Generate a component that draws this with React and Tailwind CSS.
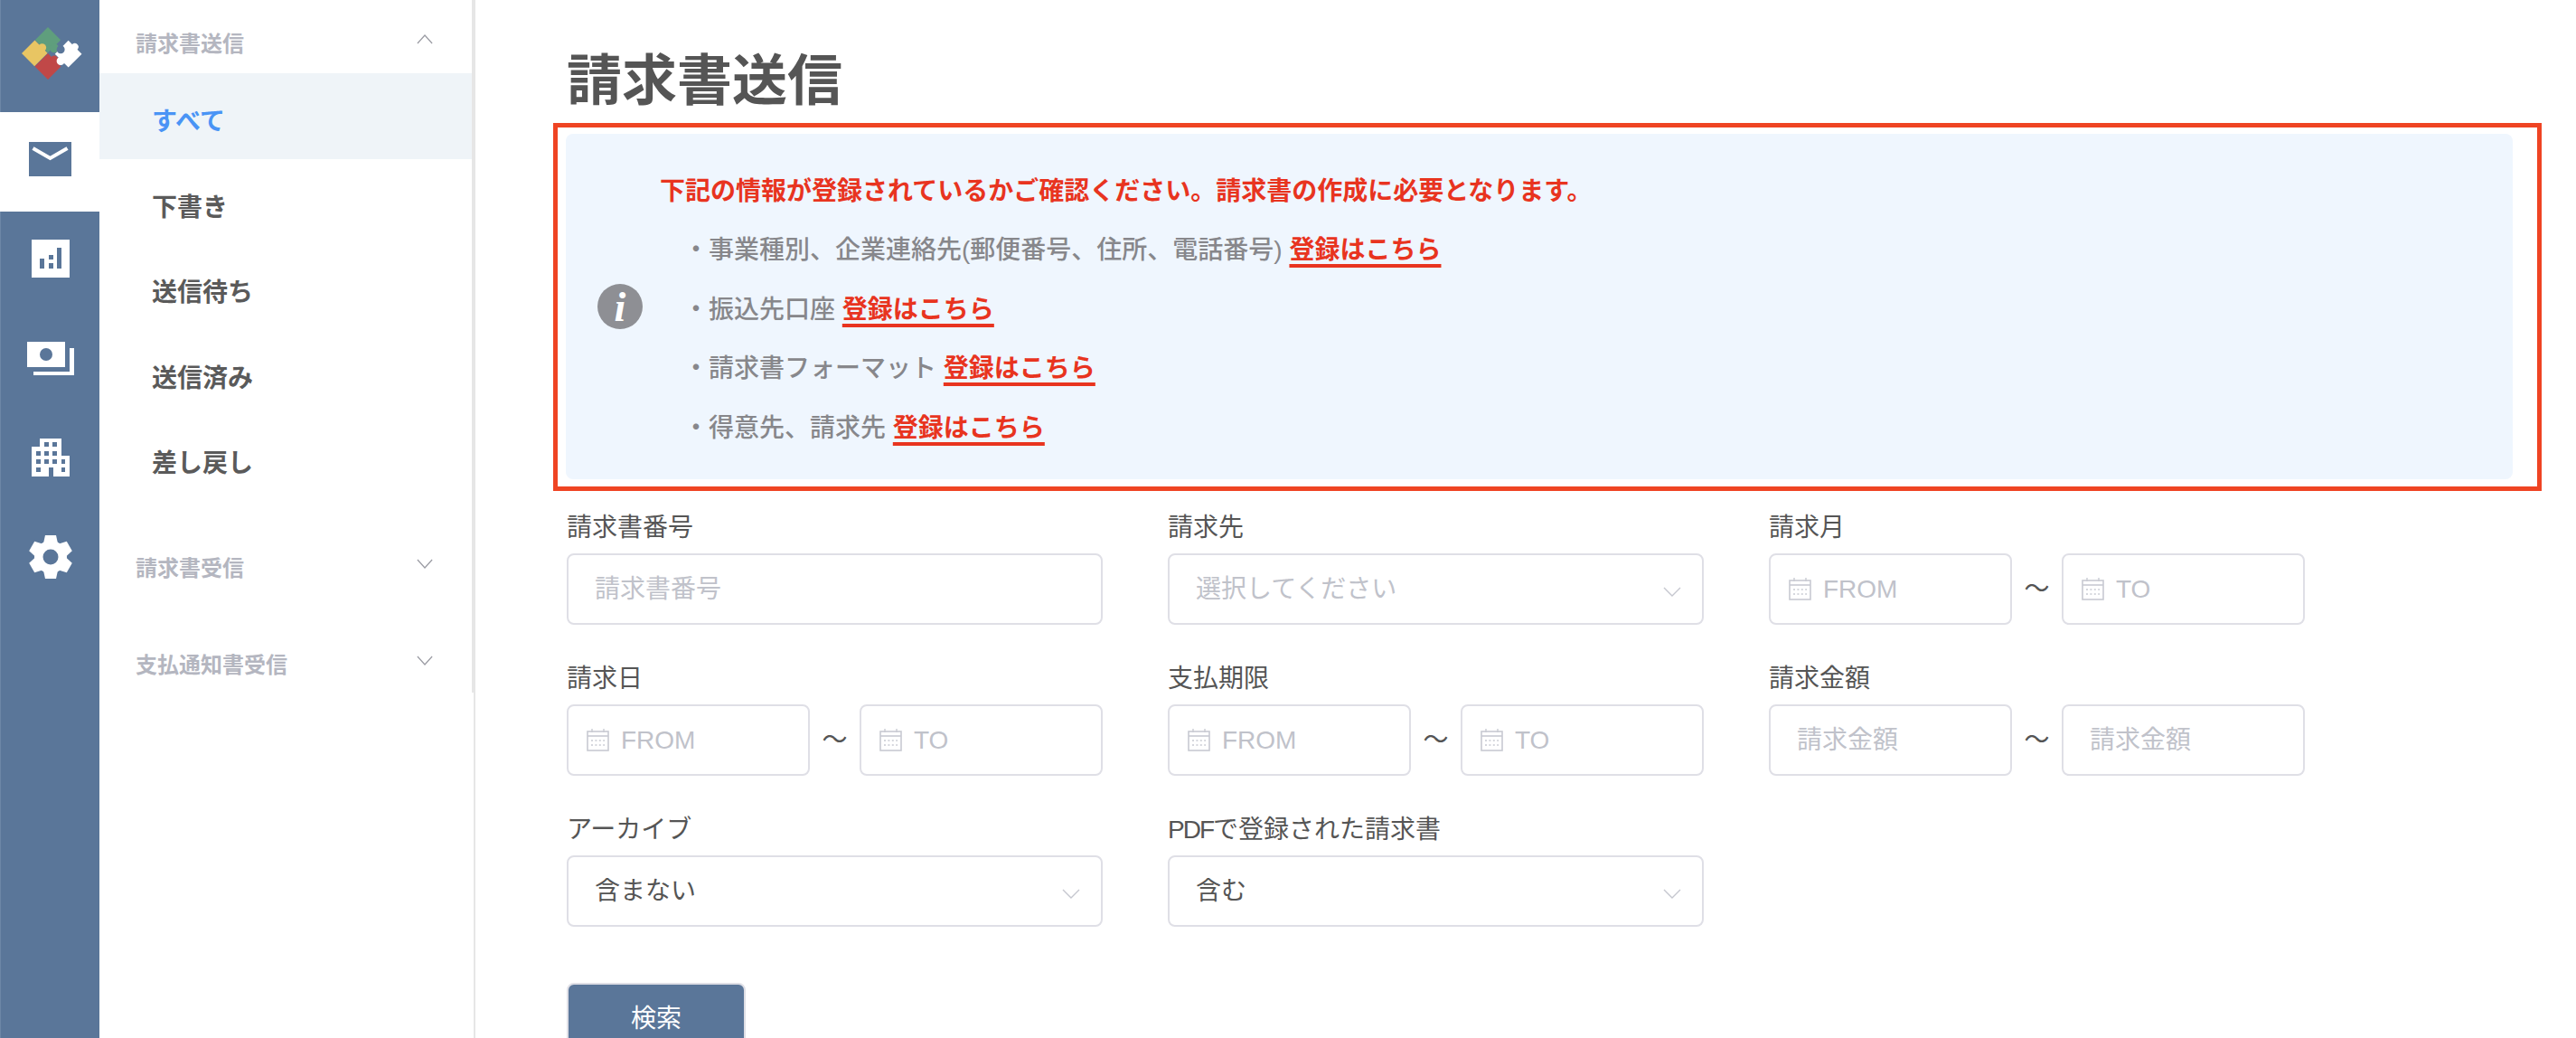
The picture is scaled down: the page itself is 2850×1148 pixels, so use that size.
import React from 'react';

const BLUE = '#5a7699';

// Puzzle logo, drawn in a rotated square grid
const Logo = () => (
    <svg width="110" height="124" viewBox="0 0 110 124">
        <g transform="translate(52 59) rotate(45)">
            <rect x="-20.5" y="-20.5" width="20" height="20" fill="#5f9e7d" />
            <rect x="-20.5" y="0" width="20" height="20.5" fill="#e8c563" />
            <rect x="0" y="0" width="20.5" height="20.5" fill="#c04848" />
            <circle cx="-9" cy="0" r="4.5" fill="#e8c563" />
            <circle cx="9" cy="-1" r="4.5" fill="#c04848" transform="rotate(90 9 0)" />
            <circle cx="1" cy="-9" r="5" fill="#5f9e7d" />
            <g transform="translate(4 -4)">
                <rect x="2" y="-22" width="21" height="21" fill="#fff" />
                <circle cx="3" cy="-9" r="4.5" fill={BLUE} />
                <circle cx="12" cy="0" r="4.5" fill="#fff" />
                <circle cx="12" cy="-22" r="4" fill="#fff" />
            </g>
        </g>
    </svg>
);

const MailIcon = () => (
    <svg width="47" height="38" viewBox="0 0 47 38">
        <rect width="47" height="38" fill={BLUE} />
        <path d="M4.5 7 L23.5 18 L42.5 7" fill="none" stroke="#fff" strokeWidth="4" />
    </svg>
);

const ChartIcon = () => (
    <svg width="42" height="42" viewBox="0 0 42 42">
        <rect width="42" height="42" fill="#fff" />
        <path d="M9 21h5v11H9zM19 17h5v5h-5zM19 26h5v6h-5zM28 9h5v23h-5z" fill={BLUE} />
    </svg>
);

const MoneyIcon = () => (
    <svg width="52" height="37" viewBox="0 0 52 37">
        <path d="M0 0h42v28H0z" fill="#fff" />
        <circle cx="21" cy="14" r="7" fill={BLUE} />
        <path d="M47 7h5v30H7v-4h40z" fill="#fff" />
    </svg>
);

const BuildingIcon = () => (
    <svg width="42" height="42" viewBox="0 0 42 42">
        <path d="M9 0h24v19h9v23H0V9h9z" fill="#fff" />
        <path
            d="M14 4h5v5h-5zM23 4h5v5h-5zM5 14h5v5H5zM14 14h5v5h-5zM23 14h5v5h-5zM5 23h5v5H5zM14 23h5v5h-5zM23 23h5v5h-5zM33 23h4v5h-4zM5 32h5v5H5zM33 32h4v5h-4zM19 32h5v10h-5z"
            fill={BLUE}
        />
    </svg>
);

const GearIcon = () => (
    <svg width="48" height="48" viewBox="-24 -24 48 48">
        <circle r="18" fill="#fff" />
        {[0, 60, 120, 180, 240, 300].map((a) => (
            <path key={a} d="M-8 -15 L-6 -24 L6 -24 L8 -15 Z" fill="#fff" transform={`rotate(${a})`} />
        ))}
        <circle r="8.5" fill={BLUE} />
    </svg>
);

const Chevron = ({ up, color = '#9a9ba3', className = '', width = 20 }) => (
    <svg width={width} height="12" viewBox="0 0 20 12" preserveAspectRatio="none" className={className}>
        <path d={up ? 'M1 11 L10 2 L19 11' : 'M1 1 L10 10 L19 1'} fill="none" stroke={color} strokeWidth="1.4" />
    </svg>
);

const CalendarIcon = () => (
    <svg width="25" height="25" viewBox="0 0 25 25" className="shrink-0">
        <rect x="1" y="3" width="23" height="21" fill="none" stroke="#c8cad2" strokeWidth="1.6" />
        <path d="M1 8h23" stroke="#c8cad2" strokeWidth="1.6" />
        <path d="M6 0v4M19 0v4" stroke="#c8cad2" strokeWidth="1.4" />
        <path d="M5 13h15M5 18h15" stroke="#c8cad2" strokeWidth="1.6" strokeDasharray="2 2.4" />
    </svg>
);

const InfoIcon = () => (
    <div className="w-[50px] h-[50px] shrink-0 rounded-full bg-[#8e8f94] flex items-center justify-center text-white text-[46px] font-bold italic font-['Liberation_Serif',serif]">
        i
    </div>
);

const RailItem = ({ active, children }) => (
    <div className={`h-[110px] flex items-center justify-center pb-[6px] ${active ? 'bg-white -ml-px' : ''}`}>{children}</div>
);

// Left icon rail
const Rail = () => (
    <nav className="w-[110px] shrink-0 bg-[#5a7699] border-l border-[#6c86a6]">
        <div className="h-[124px]">
            <Logo />
        </div>
        <RailItem active>
            <MailIcon />
        </RailItem>
        <RailItem>
            <ChartIcon />
        </RailItem>
        <RailItem>
            <MoneyIcon />
        </RailItem>
        <RailItem>
            <BuildingIcon />
        </RailItem>
        <RailItem>
            <GearIcon />
        </RailItem>
    </nav>
);

const MenuHead = ({ title, up, className, chevronClass }) => (
    <div className={`flex justify-between pl-[40px] pr-[43px] text-[24px] font-bold text-[#b4b6c0] ${className}`}>
        <span>{title}</span>
        <Chevron up={up} width={18} className={chevronClass} />
    </div>
);

const items = ['すべて', '下書き', '送信待ち', '送信済み', '差し戻し'];

// Sub menu column
const SubMenu = () => (
    <aside className="w-[416px] shrink-0 border-r-2 border-[#e6e6e6]">
        <div className="h-[766px] border-r-2 border-[#e6e6e6]">
            <MenuHead title="請求書送信" up className="h-[81px] pt-[31px] leading-[36px]" chevronClass="mt-[6px]" />
            {items.map((t, i) => (
                <div
                    key={t}
                    className={`h-[94.5px] pl-[58px] pt-[14px] flex items-center text-[28px] font-bold ${
                        i === 0 ? 'bg-[#eff4f8] text-[#4a94f5]' : 'text-[#5a5a5a]'
                    }`}
                >
                    {t}
                </div>
            ))}
            <MenuHead title="請求書受信" className="mt-[57px] h-[36px] leading-[36px] items-center" chevronClass="mb-[10px]" />
            <MenuHead title="支払通知書受信" className="mt-[71px] h-[36px] leading-[36px] items-center" chevronClass="mb-[10px]" />
        </div>
    </aside>
);

const Register = () => (
    <a className="font-bold text-[#e8341f] underline decoration-[4px] underline-offset-[6px]">登録はこちら</a>
);

const notices = ['事業種別、企業連絡先(郵便番号、住所、電話番号)', '振込先口座', '請求書フォーマット', '得意先、請求先'];

const Notice = () => (
    <div className="mt-[13px] h-[407px] border-[5px] border-[#ef4423] pt-[7px] pb-[8px] pl-[9px] pr-[27px] -ml-[15px] w-[2200px]">
        <div className="h-[382px] rounded-[8px] bg-[#eff6fe] flex items-center pl-[35px] gap-[19px]">
            <InfoIcon />
            <div className="pt-[7px] text-[28px] leading-[65.5px]">
                <p className="font-bold text-[#e8341f]">下記の情報が登録されているかご確認ください。請求書の作成に必要となります。</p>
                {notices.map((n) => (
                    <p key={n} className="pl-[26px] font-medium text-[#87878b]">
                        ・{n} <Register />
                    </p>
                ))}
            </div>
        </div>
    </div>
);

const boxCls = 'h-[79px] border-2 border-[#dfdfe6] rounded-[8px] bg-white';
const inputCls =
    'w-full min-w-0 bg-transparent outline-none text-[28px] text-[#555] placeholder:text-[#c0c2ca]';

const Field = ({ label, children }) => (
    <div className="w-[593px]">
        <div className="h-[40px] mb-[11px] leading-[46px] text-[28px] text-[#555]">{label}</div>
        {children}
    </div>
);

const TextBox = ({ placeholder, className = 'w-full' }) => (
    <div className={`${boxCls} ${className} px-[29px] flex items-center`}>
        <input className={inputCls} placeholder={placeholder} />
    </div>
);

const SelectBox = ({ value, placeholder }) => (
    <div className={`${boxCls} w-full pl-[29px] pr-[23px] flex items-center justify-between text-[28px]`}>
        <span className={placeholder ? 'text-[#c0c2ca]' : 'text-[#555]'}>{value}</span>
        <Chevron color="#c5c7cf" className="mt-[6px]" />
    </div>
);

const DateBox = ({ placeholder }) => (
    <div className={`${boxCls} w-[269px] pl-[20px] pr-[8px] flex items-center gap-[13px]`}>
        <CalendarIcon />
        <input className={inputCls} placeholder={placeholder} />
    </div>
);

const Range = ({ children }) => (
    <div className="flex items-center">
        {children[0]}
        <span className="w-[55px] text-center text-[28px] text-[#555]">〜</span>
        {children[1]}
    </div>
);

const SearchForm = () => (
    <div className="mt-[18px] grid grid-cols-[repeat(3,593px)] gap-x-[72px] gap-y-[37px]">
        <Field label="請求書番号">
            <TextBox placeholder="請求書番号" />
        </Field>
        <Field label="請求先">
            <SelectBox value="選択してください" placeholder />
        </Field>
        <Field label="請求月">
            <Range>
                <DateBox placeholder="FROM" />
                <DateBox placeholder="TO" />
            </Range>
        </Field>
        <Field label="請求日">
            <Range>
                <DateBox placeholder="FROM" />
                <DateBox placeholder="TO" />
            </Range>
        </Field>
        <Field label="支払期限">
            <Range>
                <DateBox placeholder="FROM" />
                <DateBox placeholder="TO" />
            </Range>
        </Field>
        <Field label="請求金額">
            <Range>
                <TextBox placeholder="請求金額" className="w-[269px]" />
                <TextBox placeholder="請求金額" className="w-[269px]" />
            </Range>
        </Field>
        <Field label="アーカイブ">
            <SelectBox value="含まない" />
        </Field>
        <Field
            label={
                <>
                    <span className="tracking-[-2px]">PDF</span>で登録された請求書
                </>
            }
        >
            <SelectBox value="含む" />
        </Field>
    </div>
);

export default function App() {
    return (
        <div className="flex h-[1148px] overflow-hidden bg-white font-['Liberation_Sans','Noto_Sans_CJK_JP',sans-serif]">
            <Rail />
            <SubMenu />
            <main className="flex-1 pl-[101px] pt-[51px]">
                <h1 className="h-[72px] leading-[78px] text-[61px] font-bold text-[#555]">請求書送信</h1>
                <Notice />
                <SearchForm />
                <button className="mt-[62px] w-[198px] h-[79px] rounded-[8px] border-2 border-[#dfdfe6] bg-[#5a7699] text-white text-[28px]">
                    検索
                </button>
            </main>
        </div>
    );
}
